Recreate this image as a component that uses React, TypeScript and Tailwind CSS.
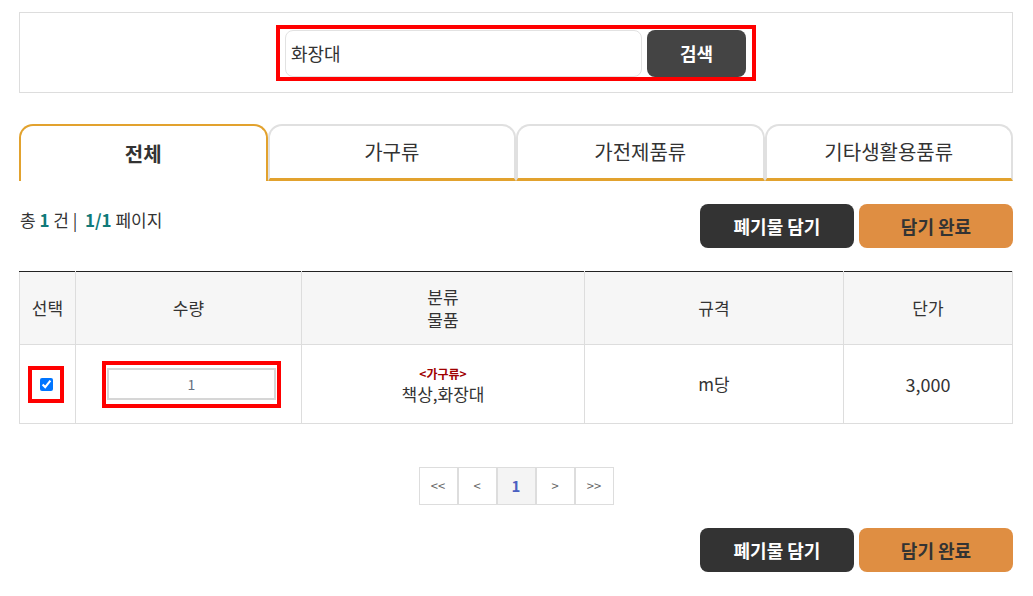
import { useState } from 'react';

type TabKey = 'all' | 'furniture' | 'appliance' | 'etc';

const tabs: { key: TabKey; label: string }[] = [
  { key: 'all', label: '전체' },
  { key: 'furniture', label: '가구류' },
  { key: 'appliance', label: '가전제품류' },
  { key: 'etc', label: '기타생활용품류' },
];

function ActionButtons() {
  return (
    <div className="flex gap-[5px]">
      <button className="w-[154px] h-[44px] rounded-[8px] bg-[#333333] text-white text-[18px] font-bold">
        폐기물 담기
      </button>
      <button className="w-[154px] h-[44px] rounded-[8px] bg-[#df8e42] text-[#333333] text-[18px] font-bold">
        담기 완료
      </button>
    </div>
  );
}

export default function App() {
  const [activeTab, setActiveTab] = useState<TabKey>('all');
  const [keyword, setKeyword] = useState('화장대');
  const [checked, setChecked] = useState(true);
  const [qty, setQty] = useState('1');

  return (
    <div
      className="min-h-screen bg-white text-[#333333] pl-[19px] pr-[20px] pt-[12px]"
      style={{ fontFamily: '"Noto Sans CJK KR", "Noto Sans", sans-serif' }}
    >
      {/* Search */}
      <div className="h-[81px] border border-[#dddddd] flex items-center justify-center">
        <div className="flex border-4 border-[#ff0000] pt-[1px] pl-[5px] pr-[6px] gap-[5px]">
          <input
            value={keyword}
            onChange={(e) => setKeyword(e.target.value)}
            className="w-[357px] h-[47px] rounded-[8px] border border-[#e2e2e2] px-[5px] text-[18px] text-[#333333] outline-none"
          />
          <button className="w-[99px] h-[47px] rounded-[8px] bg-[#444444] text-white text-[18px] font-bold">
            검색
          </button>
        </div>
      </div>

      {/* Tabs */}
      <div className="grid grid-cols-4 mt-[31px] h-[57px]">
        {tabs.map((t) => (
          <button
            key={t.key}
            onClick={() => setActiveTab(t.key)}
            className={`rounded-t-[14px] text-[20px] border-2 ${
              activeTab === t.key
                ? 'border-[#e2a22e] border-b-0 bg-white font-bold'
                : 'border-[#e0e0e0] border-b-[3px] border-b-[#e2a22e] bg-white'
            }`}
          >
            {t.label}
          </button>
        ))}
      </div>

      {/* Count + actions */}
      <div className="flex justify-between items-start mt-[23px]">
        <p className="text-[17px] pt-[3px] pl-[1px]">
          총 <b className="text-[#107a7a]">1</b> 건 |&nbsp; <b className="text-[#107a7a]">1/1</b> 페이지
        </p>
        <ActionButtons />
      </div>

      {/* Table */}
      <table className="w-full mt-[23px] border-collapse border-t border-t-[#222222] text-[17px] text-center">
        <thead>
          <tr className="h-[73px] bg-[#f6f6f6]">
            <th className="w-[56px] font-normal border border-[#dddddd] border-t-[#222222]">선택</th>
            <th className="w-[226px] font-normal border border-[#dddddd] border-t-[#222222]">수량</th>
            <th className="w-[283px] font-normal border border-[#dddddd] border-t-[#222222] leading-[23px]">
              분류
              <br />
              물품
            </th>
            <th className="w-[259px] font-normal border border-[#dddddd] border-t-[#222222]">규격</th>
            <th className="font-normal border border-[#dddddd] border-t-[#222222]">단가</th>
          </tr>
        </thead>
        <tbody>
          <tr className="h-[79px]">
            <td className="border border-[#dddddd]">
              <div className="flex justify-center pr-[3px]">
                <div className="w-[36px] h-[37px] border-4 border-[#ff0000] flex items-center justify-center">
                  <input
                    type="checkbox"
                    checked={checked}
                    onChange={(e) => setChecked(e.target.checked)}
                    className="w-[13px] h-[13px] accent-[#0075ff]"
                  />
                </div>
              </div>
            </td>
            <td className="border border-[#dddddd]">
              <div className="flex justify-center pl-[6px]">
                <div className="w-[179px] h-[47px] border-4 border-[#ff0000] flex items-center justify-center">
                  <input
                    value={qty}
                    onChange={(e) => setQty(e.target.value)}
                    className="w-[169px] h-[32px] border-2 border-[#d6d6d6] text-center text-[14px] text-[#667080] outline-none"
                  />
                </div>
              </div>
            </td>
            <td className="border border-[#dddddd]">
              <div className="flex flex-col items-center gap-[4px] pt-[2px]">
                <span className="text-[12px] leading-[13px] font-bold text-[#a00000]">&lt;가구류&gt;</span>
                <span className="text-[17px] leading-[20px]">책상,화장대</span>
              </div>
            </td>
            <td className="border border-[#dddddd]">m당</td>
            <td className="border border-[#dddddd] text-[18px]">3,000</td>
          </tr>
        </tbody>
      </table>

      {/* Pagination */}
      <div className="flex justify-center mt-[43px]">
        {['<<', '<', '1', '>', '>>'].map((p) => (
          <span
            key={p}
            className={`w-[39px] h-[38px] flex items-center justify-center border border-[#dddddd] ${
              p === '1' ? 'bg-[#f4f4f4] text-[#4a5fc1] font-bold text-[15px]' : 'text-[#666666] text-[13px]'
            }`}
          >
            {p}
          </span>
        ))}
      </div>

      {/* Bottom actions */}
      <div className="flex justify-end mt-[23px] pb-[24px]">
        <ActionButtons />
      </div>
    </div>
  );
}
